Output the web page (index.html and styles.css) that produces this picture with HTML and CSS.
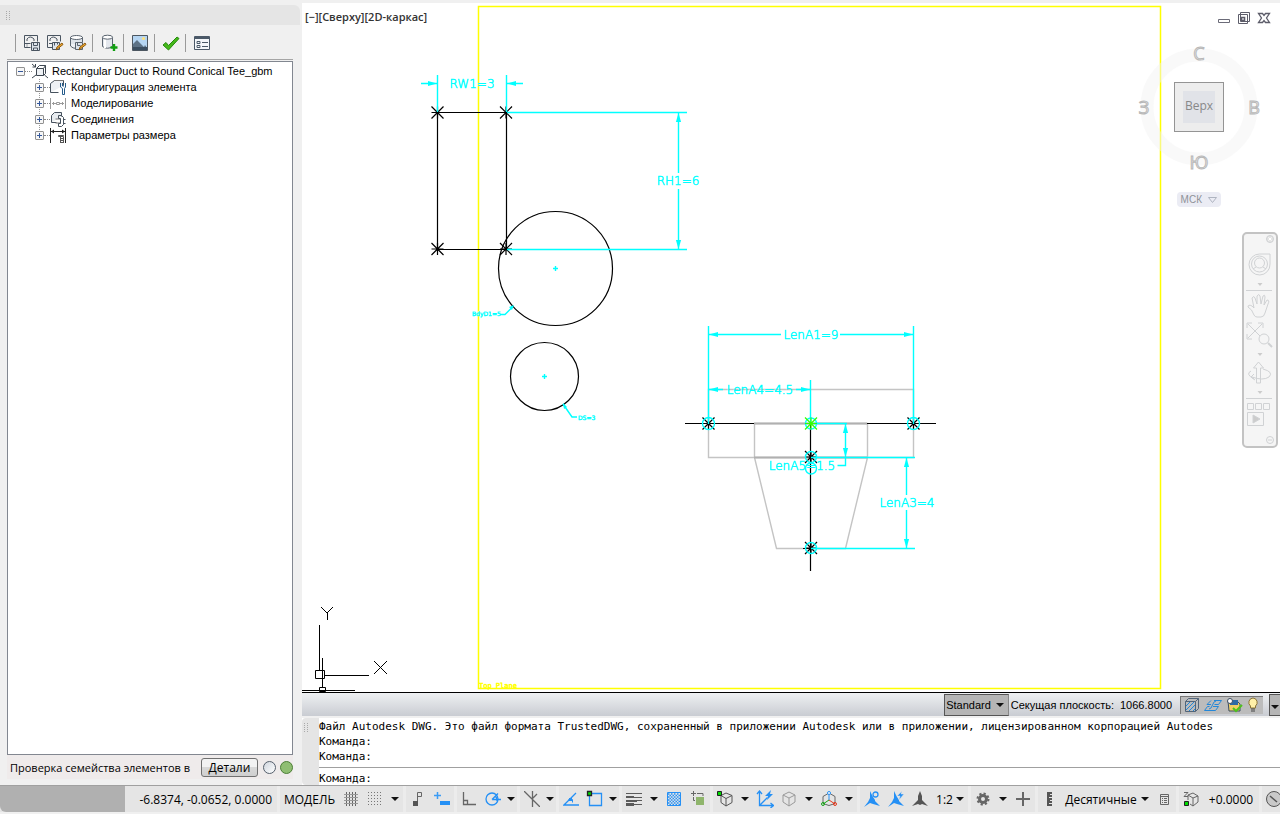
FILE: index.html
```html
<!DOCTYPE html>
<html lang="ru">
<head>
<meta charset="utf-8">
<title>Редактор семейства элементов</title>
<link rel="stylesheet" href="styles.css">
</head>
<body>
<div class="app">
  <div class="workspace">
    <aside class="palette">
      <div class="palette-grip"><svg width="4" height="10"><path d="M.5 0v10M3.500 0v10" stroke="#aaa" stroke-dasharray="1 1"/></svg></div>
      <div class="palette-body">
        <div class="toolbar" role="toolbar" aria-label="Семейство">
          <span class="sep"></span>
          <button class="tool" aria-label="Сохранить семейство"><svg width="18" height="18" fill="none" stroke="#4a5561"><path d="M1.500 1.500h13v6M1.500 1.500v12h6M1.500 9.500h6" /><path d="M4 7V5q3-4 7 0v2" /><path d="M4 9.500v4" stroke-dasharray="1 1"/><path d="M8.500 8.500h8v8h-8z" fill="#dde3ea"/><path d="M10.500 8.500v3h4v-3M10.500 16.500v-2.500h4v2.500"/></svg></button>
          <button class="tool" aria-label="Изменить семейство"><svg width="18" height="18" fill="none" stroke="#4a5561"><path d="M1.500 1.500h13v6M1.500 1.500v12h6M3 9.500h3"/><path d="M4 7V5q3-4 7 0v2"/><path d="M6.500 8.500h7v7h-7z" fill="#dde3ea"/><path d="M8.500 8.500v3M11.500 8.500v2"/><path d="M10 16l1-3 5-4 1 1.500-5 4z" fill="#f0a92b" stroke="#8d5b14"/></svg></button>
          <button class="tool" aria-label="Изменить каталог"><svg width="18" height="18" fill="none" stroke="#5a646f"><path d="M1.500 3v9q2 2.500 6 2.500M13.500 3v5" fill="#eef1f5"/><path d="M2 4h11v6H2z" fill="#dfe4ea" stroke="none"/><ellipse cx="7.500" cy="3.500" rx="6" ry="2" fill="#fff"/><path d="M6.500 8.500h7v7h-7z" fill="#dde3ea"/><path d="M8.500 8.500v3h3"/><path d="M10 16l1-3 5-4 1 1.500-5 4z" fill="#f0a92b" stroke="#8d5b14"/></svg></button>
          <span class="sep"></span>
          <button class="tool" aria-label="Добавить в каталог"><svg width="18" height="18"><path d="M2.500 3v9.500q5 3.500 10 0V3z" fill="#e4e8ee" stroke="#5a646f"/><path d="M4 5h2v9H4z" fill="#fff"/><ellipse cx="7.500" cy="3.200" rx="5" ry="2" fill="#fff" stroke="#5a646f"/><path d="M14 10v7M10.500 13.500h7" stroke="#12a012" stroke-width="2.400"/></svg></button>
          <span class="sep"></span>
          <button class="tool" aria-label="Образец"><svg width="18" height="18"><path d="M1.500 1.500h15v15h-15z" fill="#b5d5f2" stroke="#4d5761"/><path d="M2 10l4-4 7 7 1-2 2 3v2H2z" fill="#5d7286"/><path d="M2 13h14v3H2z" fill="#3b4e60"/><circle cx="12.500" cy="4.500" r="1.600" fill="#ffe27c"/></svg></button>
          <span class="sep"></span>
          <button class="tool" aria-label="Проверить"><svg width="18" height="18"><path d="M1 11l3-2.500 2.500 3L15 3l2 1.500L6.500 16z" fill="#45b81a" stroke="#258b0c"/></svg></button>
          <span class="sep"></span>
          <button class="tool" aria-label="Параметры"><svg width="18" height="18" fill="none" stroke="#4b5968"><path d="M1.500 2.500h15v13h-15z" fill="#f4f7fa"/><path d="M2 4h14" stroke-width="2"/><path d="M4 7.500h3v2H4zM4 11.500h3v2H4z"/><path d="M9 8.500h6M9 12.500h6"/></svg></button>
        </div>
        <div class="tree-box">
          <ul class="tree">
            <li>
              <div class="row"><button class="toggle minus" aria-label="Свернуть"></button><span class="dots wide"></span>
                <svg width="16" height="16" fill="none" stroke="#3d4650"><path d="M4.500 5.500h7v7h-7z" fill="#eef1f4"/><path d="M4.500 5.500l3-3h6l-2 3M13.500 2.500v8l-2 2M0 1l3.500 3M0 15l4-3M16 15l-3.500-3M3.500 1v3h-3"/></svg>
                <span>Rectangular Duct to Round Conical Tee_gbm</span></div>
              <ul class="branch">
                <li class="row"><button class="toggle" aria-label="Развернуть"></button><span class="dots"></span><svg width="16" height="16" fill="none" stroke="#46515d"><path d="M.5 13.500v-9l4-3h9v5M.5 13.500h8" fill="#edf0f4"/><path d="M4.500 1.500h9" stroke="#777"/><path d="M10.500 4v4l2 1.500v6h2v-6l1-1.500V4M12.500 4v3h1.500" stroke="#245b8a"/></svg><span>Конфигурация элемента</span></li>
                <li class="row"><button class="toggle" aria-label="Развернуть"></button><span class="dots"></span><svg width="16" height="16" fill="none" stroke="#9a9a9a"><path d="M.5 3v11M15.500 3v11M2 8.500h4M10 8.500h4M6.500 7.500h3v2h-3zM3.500 7v3M12.500 7v3"/></svg><span>Моделирование</span></li>
                <li class="row"><button class="toggle" aria-label="Развернуть"></button><span class="dots"></span><svg width="16" height="16" fill="none" stroke="#46515d"><path d="M1.500 11.500v-7l3-3h7v4M1.500 11.500h5" fill="#e8ecf0"/><path d="M5.500 8h5M5.500 12h5" stroke="#777"/><path d="M8.500 4.500h3l2 2v7l-2 2h-3M8.500 4.500v3h2v5h-2v3M13.500 8.500h2M13.500 12.500h2"/></svg><span>Соединения</span></li>
                <li class="row"><button class="toggle" aria-label="Развернуть"></button><span class="dots"></span><svg width="16" height="16" fill="none" stroke="#222"><path d="M.5 1v15M15.500 1v15M1 4.500h14"/><path d="M1 4.500l3-2v4zM15 4.500l-3-2v4z" fill="#222" stroke="none"/><path d="M8.500 8.500h5v1h-5zM10.500 10v5M13.500 10v5M10 11.500h3M10 13.500h3M10 15.500h4" stroke="#555"/></svg><span>Параметры размера</span></li>
              </ul>
            </li>
          </ul>
        </div>
        <div class="check-row">
          <span class="check-text">Проверка семейства элементов в</span>
          <button class="details">Детали</button>
          <span class="lamp"></span><span class="lamp green"></span>
        </div>
      </div>
    </aside>

    <main class="editor">
      <section class="canvas">
        <svg class="drawing" width="978" height="689" viewBox="302 3 978 689">
          <defs>
            <g id="node"><path d="M0-6V6M-6 0H6M-6-6L6 6M-6 6L6-6"/></g>
            <path id="ar" d="M0 0L9-2.600V2.600z"/>
          </defs>
          <path class="plane" d="M478.500 6.500h682v682h-682z"/>
          <g class="ghost">
            <path d="M708.500 389.500h205v68h-205zM754.500 423.500h113v34h-113zM754.500 457.500l22 91h69l22-91"/>
          </g>
          <g class="solid">
            <path d="M437.500 112.500h69v137h-69zM685 423.500h70M867 423.500h69M810.500 423v148M803 548.500h16"/>
            <circle cx="555.500" cy="268.500" r="57"/>
            <circle cx="544.500" cy="376.500" r="34"/>
          </g>
          <path class="ghost strong" d="M754 423.500h113M754 457.500h113"/>
          <g class="mark">
            <use href="#node" x="437.500" y="112.500"/><use href="#node" x="506" y="112.500"/>
            <use href="#node" x="437.500" y="249"/><use href="#node" x="506" y="249"/>
            <use href="#node" x="708.500" y="423.500"/><use href="#node" x="913.500" y="423.500"/>
            <use href="#node" x="811" y="457"/><use href="#node" x="811" y="548"/>
          </g>
          <g class="dim">
            <path d="M421 83.500h16M507 83.500h16M437.500 75v37M506.500 75v37M507 112.500h180M507 249.500h180M678.500 113v60M678.500 189v60"/>
            <path d="M553 268.500h5M555.500 266v5M542 376.500h5M544.500 374v5M500 314.500h5l8-8M563 404l9 13h5"/>
            <path d="M708.500 326v98M913.500 326v98M810.500 380v44M709 334.500h72M840 334.500h73M709 389.500h14M796 389.500h14"/>
            <path d="M811 423.500h36M845.500 424v41.500h-8M811 457.500h104M906.500 458v37M906.500 510v38M811 548.500h104"/>
            <circle cx="708.500" cy="423.500" r="6"/><circle cx="913.500" cy="423.500" r="6"/><circle cx="811" cy="423.500" r="5.500"/><circle cx="811" cy="457" r="5.500"/><circle cx="811" cy="468.500" r="5.500"/><circle cx="811" cy="548" r="5.500"/>
          </g>
          <g class="mark lime"><use href="#node" x="811" y="423.500"/></g>
          <g class="arrows">
            <use href="#ar" transform="translate(437 83.500) rotate(180)"/><use href="#ar" transform="translate(507 83.500)"/>
            <use href="#ar" transform="translate(678.500 113) rotate(90)"/><use href="#ar" transform="translate(678.500 249) rotate(-90)"/>
            <use href="#ar" transform="translate(709 334.500)"/><use href="#ar" transform="translate(913 334.500) rotate(180)"/>
            <use href="#ar" transform="translate(709 389.500)"/><use href="#ar" transform="translate(810 389.500) rotate(180)"/>
            <use href="#ar" transform="translate(845.500 424) rotate(90)"/><use href="#ar" transform="translate(845.500 457) rotate(-90)"/>
            <use href="#ar" transform="translate(906.500 458) rotate(90)"/><use href="#ar" transform="translate(906.500 548) rotate(-90)"/>
            <path d="M514 305l-5 2 3 3zM563 403l1 6 3-2z"/>
          </g>
          <g class="cad" text-anchor="middle">
            <text x="472" y="88">RW1=3</text><text x="678" y="185">RH1=6</text>
            <text x="811" y="339">LenA1=9</text><text x="760" y="394">LenA4=4.5</text>
            <text x="802" y="470">LenA5=1.5</text><text x="907" y="507">LenA3=4</text>
          </g>
          <g class="cad-small"><text x="472" y="316">BdyD1=5</text><text x="578" y="420">DS=3</text></g>
          <text class="plane-name" x="479" y="688">Top Plane</text>
          <path class="ucs" d="M319.500 625v45M324 675.500h45M315.500 670.500h9v8h-9zM322.500 658v29M302 690.500h53M319.500 687.500h6v4h-6zM321 607l6 6 6-6M327.500 613v7M374 661l13 13M387 661l-13 13"/>
        </svg>
        <div class="view-label">[−][Сверху][2D-каркас]</div>
        <div class="win-buttons">
          <button aria-label="Свернуть"><svg width="14" height="14" fill="#fff" stroke="#6b6b78"><path d="M1.500 8.500h11v3h-11z"/></svg></button>
          <button aria-label="Восстановить"><svg width="14" height="14" fill="#fff" stroke="#5d5d6a"><path d="M3.500 1.500h9v9h-9zM1.500 3.500h9v9h-9z"/><path d="M4.500 6.500h3v3h-3z" stroke-width="1.600"/></svg></button>
          <button aria-label="Закрыть"><svg width="14" height="14" fill="#fff" stroke="#5d5d6a" stroke-width="1.300"><path d="M1.500 2.500h4l1.500 2 1.500-2h4L9.500 7l3 4.500h-4L7 9.500l-1.500 2h-4l3-4.500z"/></svg></button>
        </div>
        <div class="cube">
          <svg class="ring" width="124" height="124"><circle cx="62" cy="62" r="52" fill="none" stroke="#f4f4f4" stroke-opacity=".5" stroke-width="13"/></svg>
          <button class="dir n">С</button><button class="dir w">З</button><button class="dir e">В</button><button class="dir s">Ю</button>
          <button class="face"><span>Верх</span></button>
        </div>
        <button class="msk">МСК <svg width="9" height="6" fill="none" stroke="#aeb4c0"><path d="M.5.5h8l-4 5z"/></svg></button>
        <nav class="navbar" aria-label="Навигация">
          <svg width="32" height="212" viewBox="2 2 32 212" fill="none" stroke="#d0d2d4">
            <circle cx="28" cy="7" r="3.500" fill="#e4e4e4"/><path d="M26.500 5.500l3 3M29.500 5.500l-3 3" stroke="#fff"/>
            <path d="M28 22v10a10.500 10.500 0 1 1-10.500-10z"/><circle cx="17.500" cy="32" r="8"/><circle cx="17.500" cy="31" r="5"/><path d="M11 37l3-2M24 37l-3-2"/>
            <path d="M15.500 51h5l-2.500 3zM15.500 121h5l-2.500 3zM15.500 159h5l-2.500 3z" fill="#ccc" stroke="none"/>
            <path d="M4 58.500h26M4 166.500h26"/>
            <path d="M12 83q-2-6-6-8 0-3 4-1l2 2-2-10q2-3 3 0l2 6V64q2-3 3 0l1 8 2-8q2-2 2 1l-1 8 3-5q3 0 1 4l-3 9q-1 4-4 4h-4q-2 0-3-2z"/>
            <path d="M6 92l14 14M6 106l14-14M5 96v-5h5M16 91h5v5M5 102v5h5"/><circle cx="22" cy="107" r="5" fill="#f5f5f5"/><path d="M26 111l4 4" stroke-width="2"/>
            <path d="M14.500 151v-15h-3l5-6 5 6h-3v15z"/><path d="M12 147q-9-5-3-8M21 137q11 3 6 8-6 4-17 0M12 142l-3 3 4 3"/>
            <path d="M5.500 171.500h6v6h-6zM13.500 171.500h6v6h-6zM21.500 171.500h6v6h-6zM5.500 180.500h16v13h-16z"/><path d="M11 183v8l7-4z" fill="#ccc"/>
            <circle cx="28" cy="208" r="3.500"/><path d="M26 208h4"/>
          </svg>
        </nav>
      </section>

      <div class="draw-status">
        <button class="std">Standard <i class="caret"></i></button>
        <span class="cut">Секущая плоскость:</span><span class="cut-value">1066.8000</span>
        <span class="ds-icons">
          <svg width="16" height="16" fill="none" stroke="#52657a"><path d="M1.500 4.500l3-3h10v10l-3 3h-10zM1.500 4.500h10v10M11.500 4.500l3-3"/><path d="M2 9l4-4M2 13l8-8M5 14l6-6M9 14l2-2" stroke="#2487d8"/></svg>
          <svg width="18" height="16" fill="none" stroke="#2487d8"><path d="M10 3.500h7.500l-3 4h-4M7 3.500l-4 4h4M9 9.500h5.500l-3 4h-11l3-4h2M7 11l3-6M10 5l2-1M7 11l-2 1"/></svg>
          <svg width="17" height="16"><path d="M2 4h9l3 3v7H3z" fill="#f0cf62" stroke="#3c4e63"/><path d="M4 3h8v5H4z" fill="#2c6aa5"/><circle cx="4" cy="4" r="2.500" fill="#fff" stroke="#3c4e63"/><path d="M7 11l3 3 6-6" fill="none" stroke="#4ec21c" stroke-width="2"/></svg>
          <svg width="12" height="16"><path d="M6 1a4.500 4.500 0 0 1 2.500 8V11h-5V9A4.500 4.500 0 0 1 6 1z" fill="#fff0a8" stroke="#8a7438"/><path d="M4 12h4M4 14h4" stroke="#444"/></svg>
        </span>
        <button class="more" aria-label="Меню"><i class="caret"></i></button>
      </div>

      <section class="command">
        <div class="cmd-grip"><svg width="4" height="10"><path d="M.5 0v10M3.500 0v10" stroke="#aaa" stroke-dasharray="1 1"/></svg></div>
        <div class="cmd-body">
          <div class="log"><div>Файл Autodesk DWG. Это файл формата TrustedDWG, сохраненный в приложении Autodesk или в приложении, лицензированном корпорацией Autodes</div><div>Команда:</div><div>Команда:</div></div>
          <div class="prompt"><label for="cmd">Команда:</label><input id="cmd" type="text"></div>
        </div>
      </section>
    </main>
  </div>

  <footer class="status">
    <div class="blank"></div>
    <span class="coords">-6.8374, -0.0652, 0.0000</span>
    <i class="gap"></i>
    <button class="model">МОДЕЛЬ</button>
    <button class="ic" aria-label="Сетка"><svg width="16" height="16" stroke="#666"><path d="M3.500 1v14M6.500 1v14M9.500 1v14M12.500 1v14"/><path d="M1 3.500h14M1 6.500h14M1 9.500h14M1 12.500h14" stroke="#999"/></svg></button>
    <button class="ic" aria-label="Шаг"><svg width="16" height="16" stroke="#777"><path d="M1 1.500h14M1 4.500h14M1 7.500h14M1 10.500h14M1 13.500h14" stroke-dasharray="1 2"/></svg></button>
    <button class="dd wide" aria-label="Шаг: меню"><i class="caret"></i></button>
    <i class="gap"></i>
    <button class="ic" aria-label="Зависимости"><svg width="16" height="16" fill="none" stroke="#666"><path d="M7.500 11V1.500h4v4h-4"/><path d="M3 10h5v5H3z" fill="#555" stroke="none"/></svg></button>
    <button class="ic" aria-label="Динамический ввод"><svg width="16" height="16" stroke="#3b9cf5"><path d="M3.500 1v7M0 4.500h7" stroke-width="1.500"/><path d="M6 10h10v4H6z" fill="#2590f5" stroke="none"/></svg></button>
    <i class="gap"></i>
    <button class="ic" aria-label="Орто"><svg width="16" height="16" fill="none" stroke="#666" stroke-width="1.300"><path d="M2.500 1v12.500H15M2.500 9.500h4v4"/></svg></button>
    <button class="ic" aria-label="Полярное отслеживание"><svg width="16" height="16" fill="none" stroke="#2590f5" stroke-width="1.300"><circle cx="7" cy="8" r="6"/><path d="M7 8.500h9M7 8.500l6-6M10 5q2 1 2 5"/></svg></button>
    <button class="dd" aria-label="Углы"><i class="caret"></i></button>
    <i class="gap"></i>
    <button class="ic" aria-label="Изометрия"><svg width="16" height="16" fill="none" stroke="#666" stroke-width="1.300"><path d="M0 0l16 16M8.500 0v16M13 3L8 8"/></svg></button>
    <button class="dd" aria-label="Изометрия: меню"><i class="caret"></i></button>
    <i class="gap"></i>
    <button class="ic" aria-label="Объектное отслеживание"><svg width="16" height="16" stroke="#2590f5" stroke-width="1.300" fill="none"><path d="M13 2L1 14h15"/><path d="M5.500 8.500h4v3" stroke-width="1"/><path d="M6 7h3v3H6z" fill="#2590f5" stroke="none"/></svg></button>
    <button class="ic" aria-label="Привязка"><svg width="18" height="18" fill="none" stroke="#2590f5" stroke-width="1.300"><path d="M3.500 3.500h12v12h-12z"/><path d="M1.500 1.500h4v4h-4z" fill="#0d0" stroke="#222"/></svg></button>
    <button class="dd" aria-label="Привязка: меню"><i class="caret"></i></button>
    <i class="gap"></i>
    <button class="ic" aria-label="Вес линий"><svg width="16" height="16" stroke="#5a5a5a"><path d="M0 2.500h16"/><path d="M0 6h8" stroke-width="2"/><path d="M8 6.500h8"/><path d="M0 10h11" stroke-width="2"/><path d="M11 9.500h5"/><path d="M0 13.500h8" stroke-width="3"/><path d="M8 13.500h8"/></svg></button>
    <button class="dd wide" aria-label="Вес: меню"><i class="caret"></i></button>
    <button class="ic" aria-label="Прозрачность"><svg width="16" height="16" fill="none" stroke="#2590f5"><path d="M1.500 1.500h13v13h-13z"/><path d="M2 3h12M2 6h12M2 9h12M2 12h12" stroke-width="1.500" stroke-dasharray="1.500 1.500"/><path d="M3.500 4.500h11M3.500 7.500h11M3.500 10.500h11M3.500 13.500h11" stroke-width="1.500" stroke-dasharray="1.500 1.500"/></svg></button>
    <button class="ic" aria-label="Циклический выбор"><svg width="16" height="16" fill="none" stroke="#666"><path d="M3.500 0v5M1 2.500h5M3.500 6v3.500H5M7 2.500h6V5"/><path d="M6 6h8v8H6z" fill="#8fb56c" stroke="none"/></svg></button>
    <i class="gap"></i>
    <button class="ic" aria-label="3D-привязка"><svg width="18" height="18" fill="none" stroke="#555"><path d="M10 3l6 2.500v7L10 16l-5-3.500v-7zM5 5.500l5 3 6-3M10 8.500V16"/><path d="M1.500 1.500h4v4h-4z" fill="#0d0" stroke="#222"/></svg></button>
    <button class="dd wide" aria-label="3D: меню"><i class="caret"></i></button>
    <button class="ic" aria-label="Динамическая ПСК"><svg width="18" height="18" fill="none" stroke="#2590f5" stroke-width="1.300"><path d="M3.500 2v13.500H17M3.500 15.500l8-8M1 4l2.500-3L6 4M14.500 13l3 2.500-3 2.500"/><path d="M15 0l-6 6h3l-1 4 6-6h-3z" fill="#2590f5" stroke="none"/></svg></button>
    <button class="ic" aria-label="Фильтр выбора"><svg width="16" height="16" fill="none" stroke="#999"><path d="M8 1l6 3v7l-6 4-6-4V4zM2 4l6 3 6-3M8 7v8"/></svg></button>
    <button class="dd wide" aria-label="Фильтр: меню"><i class="caret"></i></button>
    <button class="ic" aria-label="Гизмо"><svg width="18" height="18" fill="none" stroke="#666"><path d="M9 3l6 3.500v7l-6 2-6-2v-7z"/><path d="M9 10V3" stroke="#2590f5"/><path d="M9 10l6 4" stroke="#e33a1e"/><path d="M9 10l-6 4" stroke="#1aa51a"/><circle cx="9" cy="3" r="1.500" fill="#fff" stroke="#2590f5"/><circle cx="3" cy="14" r="1.500" stroke="#1aa51a"/><circle cx="15" cy="14" r="1.500" stroke="#e33a1e"/></svg></button>
    <button class="dd wide" aria-label="Гизмо: меню"><i class="caret"></i></button>
    <i class="gap"></i>
    <button class="ic" aria-label="Видимость аннотаций"><svg width="16" height="16" fill="#2590f5"><path d="M6 0l3 6 2 3v1l5 5-7-2-3-1-6 4 4-5 2-4z"/><circle cx="11.500" cy="3.500" r="2.500" fill="#e5e5e5" stroke="#2590f5" stroke-width="1.300"/></svg></button>
    <button class="ic" aria-label="Автомасштаб"><svg width="16" height="16" fill="#2590f5"><path d="M6 0l3 6 2 3v1l5 5-7-2-3-1-6 4 4-5 2-4z"/><path d="M14 0L9 5h3l-1 4 5-6h-3z" stroke="#e5e5e5" stroke-width=".5"/></svg></button>
    <button class="ic" aria-label="Аннотации"><svg width="16" height="16" fill="#555"><path d="M8 0l2 5v4l6 6-6-2-2 1-2-1-6 2 6-6V5z"/></svg></button>
    <button class="scale">1:2<i class="caret"></i></button>
    <i class="gap"></i>
    <button class="ic" aria-label="Рабочее пространство"><svg width="16" height="16"><circle cx="8" cy="8" r="5.500" fill="none" stroke="#666" stroke-width="2" stroke-dasharray="2.200 2.100"/><circle cx="8" cy="8" r="3.500" fill="none" stroke="#666" stroke-width="3"/></svg></button>
    <button class="dd wide" aria-label="Рабочее пространство: меню"><i class="caret"></i></button>
    <button class="ic" aria-label="Монитор аннотаций"><svg width="16" height="16" stroke="#666" stroke-width="2"><path d="M8 1v14M1 8h14"/></svg></button>
    <i class="gap"></i>
    <button class="ic" aria-label="Линейка"><svg width="16" height="16"><path d="M5 1h5v14H5z" fill="#555"/><path d="M8 3.500h2M7 6.500h3M8 9.500h2M7 12.500h3" stroke="#e5e5e5"/></svg></button>
    <button class="units">Десятичные<i class="caret"></i></button>
    <button class="ic" aria-label="Быстрые свойства"><svg width="16" height="16" fill="none" stroke="#666"><path d="M4.500 3.500h8v10h-8zM4 5.500h8M6 7.500h1M8 7.500h3M6 9.500h1M8 9.500h3M6 11.500h1M8 11.500h3"/></svg></button>
    <i class="gap"></i>
    <button class="ic" aria-label="Высота"><svg width="18" height="18" fill="none" stroke="#666"><path d="M6 5l5-2 5 3v6l-5 4-3-2M6 5l5 3 5-2M11 8v8M6 5v5M2 2.500h4l-4 4h4"/><path d="M2.500 11.500h4v4h-4z" fill="#0d0" stroke="#222"/></svg></button>
    <button class="elev">+0.0000</button>
    <i class="gap"></i>
    <button class="ic" aria-label="Отсечение"><svg width="18" height="18"><circle cx="9" cy="9" r="7.500" fill="#c9c9c9" stroke="#555"/><path d="M5 6l7 6" stroke="#555" stroke-width="1.500"/></svg></button>
  </footer>
</div>
</body>
</html>
```
FILE: styles.css
```css
* { box-sizing: border-box; }
body { margin: 0; background: #f0f0f0; color: #000; font-family: "Open Sans", "Noto Sans", sans-serif; font-size: 12px; }
button { margin: 0; padding: 0; border: 0; background: none; color: inherit; font: inherit; }
svg { flex: none; display: block; }
ul { list-style: none; margin: 0; padding: 0; }
.app { display: flex; flex-direction: column; height: 100vh; overflow: hidden; }
.workspace { display: flex; flex: 1; min-height: 0; }

.palette { display: flex; flex-direction: column; width: 302px; flex: none; padding: 5px 2px 0 0; }
.palette-grip { height: 20px; padding: 6px; background: #e5e5e5; border-radius: 0 6px 0 0; }
.palette-body { display: flex; flex-direction: column; flex: 1; min-height: 0; padding: 7px 7px 6px; }
.toolbar { display: flex; align-items: center; gap: 5px; height: 28px; padding-left: 8px; border-bottom: 1px solid #a5a5a5; margin-bottom: 1px; padding-bottom: 5px; }
.sep { width: 1px; height: 18px; background: #9a9a9a; margin-right: 2px; }
.tool { width: 18px; height: 18px; }
.tree-box { flex: 1; min-height: 0; border: 1px solid #828790; background: #fff; padding: 1px 8px; font: 11px/16px "Liberation Sans", sans-serif; }
.row { display: flex; align-items: center; height: 16px; white-space: nowrap; }
.row svg { margin-right: 4px; }
.branch .row svg { margin-right: 5px; }
.toggle { width: 9px; height: 9px; flex: none; border: 1px solid #919191; border-radius: 1px; background: linear-gradient(#33579b, #33579b) center / 5px 1px no-repeat, linear-gradient(#33579b, #33579b) center / 1px 5px no-repeat, #f6f6f6; }
.toggle.minus { background: linear-gradient(#33579b, #33579b) center / 5px 1px no-repeat, #f6f6f6; }
.dots { width: 6px; flex: none; border-top: 1px dotted #888; }
.dots.wide { width: 7px; }
.branch { padding-left: 19px; background: repeating-linear-gradient(#999 0 1px, transparent 1px 2px) 23px 0 / 1px 56px no-repeat; }
.check-row { display: flex; align-items: center; gap: 4px; height: 24px; padding: 2px 0 1px 3px; background: #efebeb; }
.check-text { flex: 1; font-size: 11px; white-space: nowrap; }
.details { width: 57px; height: 19px; border: 1px solid #707070; border-radius: 3px; margin-right: 1px; background: linear-gradient(#f2f2f2 45%, #d8d8d8 50%, #cfcfcf); }
.lamp { width: 13px; height: 13px; border: 1px solid #555f6c; border-radius: 50%; background: linear-gradient(135deg, #cfd5dd, #fff); }
.lamp.green { border-color: #4c7f36; background: #8fbe72; }

.editor { display: flex; flex-direction: column; flex: 1; min-width: 0; padding-top: 3px; }
.canvas { position: relative; flex: 1; min-height: 0; overflow: hidden; background: #fff; border-bottom: 1px solid #000; }
.plane { fill: none; stroke: #ff0; stroke-width: 1.5; }
.ghost { fill: none; stroke: #c4c4c4; stroke-width: 1.4; }
.strong { stroke-width: 2; stroke: #b0b0b0; }
.solid { fill: none; stroke: #000; stroke-width: 1.2; }
.mark { fill: none; stroke: #000; stroke-width: 1.2; }
.lime { stroke: #3f0; }
.dim { fill: none; stroke: #0ff; stroke-width: 1.4; }
.arrows { fill: #0ff; }
.cad { fill: #0ff; stroke: #0ff; stroke-width: .5; font: 200 12px "DejaVu Sans", sans-serif; }
.cad-small { fill: #0ff; stroke: #0ff; stroke-width: .4; font: 6px "DejaVu Sans", sans-serif; }
.plane-name { fill: #ff0; stroke: #ff0; stroke-width: .5; font: 7px "DejaVu Sans Mono", monospace; }
.ucs { fill: none; stroke: #000; }
.view-label { position: absolute; left: 3px; top: 6px; font-size: 11px; line-height: 16px; font-weight: 600; color: #333; }
.win-buttons { position: absolute; right: 9px; top: 8px; display: flex; gap: 6px; }
.cube { position: absolute; right: 19px; top: 42px; width: 124px; height: 124px; display: grid; place-items: center; }
.ring { position: absolute; inset: 0; }
.dir { position: absolute; width: 20px; font: 18px/20px "Open Sans", sans-serif; color: #f4f4f4; -webkit-text-stroke: 1px #b8b8b8; }
.n { top: -2px; } .s { bottom: -3px; }
.w { left: -3px; } .e { right: -3px; }
.face { position: relative; width: 50px; height: 50px; border: 1px solid #949494; background: #ededed; display: grid; place-items: center; }
.face span { width: 32px; height: 32px; background: #e1e3e8; color: #888; font-size: 12px; line-height: 30px; }
.msk { position: absolute; right: 59px; top: 189px; display: flex; align-items: center; gap: 6px; height: 15px; padding: 0 4px; border-radius: 4px; background: #ebecf4; color: #8f9298; font: 10px "Liberation Sans", sans-serif; }
.navbar { position: absolute; right: 2px; top: 229px; border: 2px solid #c3c3c3; border-radius: 5px; background: #f5f5f5; width: 36px; height: 216px; }
.draw-status { display: flex; align-items: center; justify-content: flex-end; height: 25px; flex: none; background: linear-gradient(#eef0f2, #c9ccd2); border-bottom: 2px solid #f0f0f0; font: 11px "Liberation Sans", sans-serif; white-space: nowrap; }
.caret { display: inline-block; border: 4px solid transparent; border-top: 4px solid #111; border-bottom: 0; }
.std { display: flex; align-items: center; gap: 5px; height: 22px; padding: 0 4px 0 1px; background: #b5b5b5; border: 1px solid #555; border-right-color: #888; }
.cut { margin: 0 6px 0 2px; }
.cut-value { margin-right: 8px; }
.ds-icons { display: flex; align-items: center; gap: 4px; height: 18px; padding: 0 4px 0 3px; background: #bcbcbc; border-top: 1px solid #777; border-left: 1px solid #777; }
.more { width: 11px; height: 22px; margin-left: 6px; background: #b5b5b5; border: 1px solid #555; border-right: 0; }
.command { display: flex; flex: none; height: 67px; background: #fff; }
.cmd-grip { width: 17px; padding: 5px 2px; background: #e5e5e5; border-radius: 4px 0 0 4px; }
.cmd-body { flex: 1; min-width: 0; font: 11px/15px "DejaVu Sans Mono", monospace; }
.log { height: 50px; padding-top: 1px; border-bottom: 1px solid #a0a0a0; white-space: nowrap; }
.prompt { display: flex; align-items: center; height: 17px; padding-top: 3px; }
.prompt input { flex: 1; min-width: 0; height: 14px; border: 0; outline: 0; padding: 0 4px; font: inherit; }

.status { display: flex; align-items: stretch; flex: none; height: 29px; border-top: 1px solid #a0a0a0; border-bottom: 2px solid #f0f0f0; background: #e5e5e5; white-space: nowrap; overflow: hidden; }
.status > * { flex: none; }
.status button { display: flex; align-items: center; justify-content: center; }
.blank { width: 125px; background: #b0b0b0; border-radius: 0 0 0 6px; }
.coords { width: 152px; padding-right: 5px; line-height: 27px; text-align: right; }
.gap { width: 3px; background: #ececec; }
.model { width: 59px; }
.ic { width: 24px; }
.dd { width: 12px; }
.dd.wide { width: 16px; }
.status .scale { width: 36px; gap: 3px; }
.status .units { width: 90px; gap: 4px; }
.elev { width: 56px; }
```
